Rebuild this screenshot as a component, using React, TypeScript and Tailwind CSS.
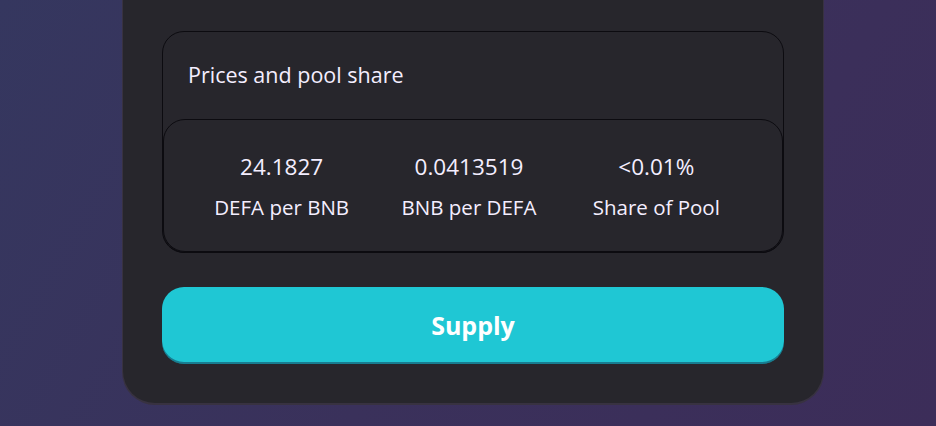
export default function App() {
  const stats = [
    { value: '24.1827', label: 'DEFA per BNB' },
    { value: '0.0413519', label: 'BNB per DEFA' },
    { value: '<0.01%', label: 'Share of Pool' },
  ];

  return (
    <div
      className="w-[936px] h-[426px] overflow-hidden flex justify-center bg-[linear-gradient(120deg,#35375f_0%,#3a315b_50%,#3c2d59_100%)]"
      style={{ fontFamily: '"Open Sans", "Noto Sans", sans-serif' }}
    >
      <div className="ml-[10px] w-[700px] h-[403px] bg-[#27262c] rounded-b-[32px] shadow-[0_1px_0_1px_#383241] px-[39px] pt-[31px] flex flex-col">
        {/* prices box */}
        <div className="h-[222px] rounded-[22px] border border-[#0c0b10] flex flex-col">
          <div className="h-[87px] pl-[25px] flex items-center text-[21.5px] text-[#f4eeff]">
            Prices and pool share
          </div>
          <div className="flex-1 rounded-[22px] border border-[#0c0b10] shadow-[0_1px_0_0_#0c0b10] flex items-center pl-[24px] pr-[32px] pt-[2px]">
            {stats.map((s) => (
              <div key={s.label} className="flex-1 flex flex-col items-center text-[#f4eeff]">
                <div className="text-[22.5px] leading-[30px]">{s.value}</div>
                <div className="mt-[11px] text-[20.5px] leading-[28px]">{s.label}</div>
              </div>
            ))}
          </div>
        </div>

        <button className="mt-[34px] h-[77px] rounded-[22px] bg-[#1fc7d4] shadow-[inset_0_-2px_0_rgba(14,14,44,0.4)] text-white text-[25px] font-bold">
          Supply
        </button>
      </div>
    </div>
  );
}
